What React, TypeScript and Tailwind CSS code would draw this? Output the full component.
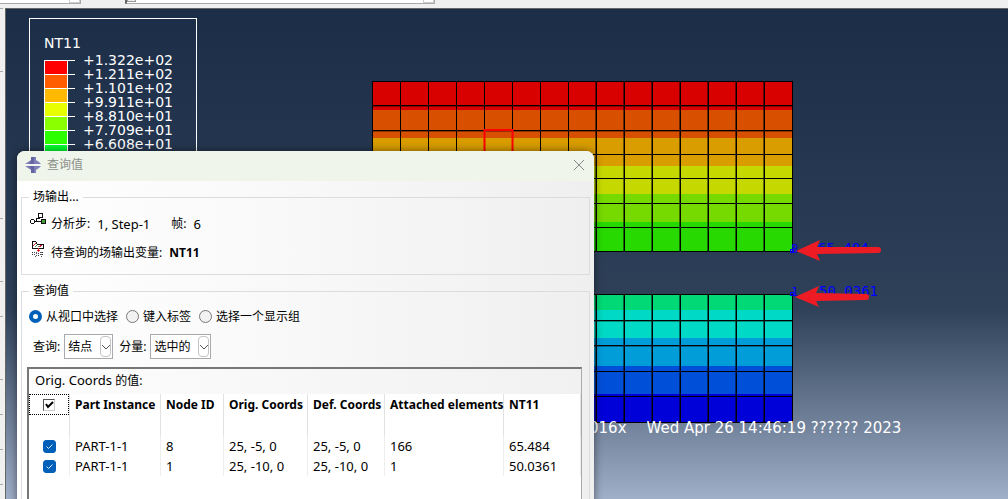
import { useState } from 'react';

const legend = [
  ['+1.322e+02', '#ff0000'],
  ['+1.211e+02', '#ff5d00'],
  ['+1.101e+02', '#ffb900'],
  ['+9.911e+01', '#e8ff00'],
  ['+8.810e+01', '#8bff00'],
  ['+7.709e+01', '#2eff00'],
  ['+6.608e+01', '#00ff2e'],
];

const upperBands = [
  [0, 29, '#d90000'],
  [29, 28, '#d94f00'],
  [57, 28, '#d99d00'],
  [85, 28, '#c5d900'],
  [113, 28, '#76d900'],
  [141, 29, '#27d900'],
] as const;

const lowerBands = [
  [0, 16, '#00d976'],
  [16, 28, '#00d9c5'],
  [44, 28, '#009dd9'],
  [72, 28, '#004fd9'],
  [100, 28, '#0000d9'],
] as const;

const columns = Array.from({ length: 16 }, (_, i) => i * 28);
const upperRows = [0, 24, 49, 73, 97, 122, 146, 170];
const lowerRows = [0, 26, 51, 77, 102, 128];

function Mesh({ bands, rows, x, y }: { bands: readonly (readonly [number, number, string])[]; rows: number[]; x: number; y: number }) {
  const bottom = rows[rows.length - 1];
  return (
    <g transform={`translate(${x} ${y})`} shapeRendering="crispEdges">
      {bands.map(([top, height, fill]) => (
        <rect key={top} x="0" y={top} width="420" height={height} fill={fill} />
      ))}
      {columns.map((c) => (
        <rect key={c} x={c} y="0" width="1" height={bottom + 1} fill="#000" />
      ))}
      {columns.slice(8, 15).map((c) => (
        <rect key={c} x={c - 1} y="0" width="1" height={bottom + 1} fill="#000" opacity="0.5" />
      ))}
      {rows.map((r) => (
        <rect key={r} x="0" y={r} width="421" height="1" fill="#000" />
      ))}
      {rows.slice(1, 3).map((r) => (
        <rect key={r} x="0" y={r + 1} width="421" height="1" fill="#000" opacity="0.35" />
      ))}
    </g>
  );
}

function Contour() {
  return (
    <svg className="absolute left-[366px] top-[67px] h-[352px] w-[530px]" viewBox="372 76 530 352" role="img" aria-label="NT11">
      <Mesh bands={upperBands} rows={upperRows} x={372} y={81} />
      <Mesh bands={lowerBands} rows={lowerRows} x={372} y={294} />
      <rect x="484.500" y="130" width="28" height="25" fill="none" stroke="#ff0000" strokeWidth="2" />
      <g fill="none" stroke="#0000ff" shapeRendering="crispEdges">
        <circle cx="792" cy="251" r="2" />
        <circle cx="792" cy="294" r="2" />
      </g>
      <g fill="#0000ff" fontSize="14" fontFamily="'DejaVu Sans Mono', monospace">
        <text x="791" y="253" fontSize="12">8</text>
        <text x="818" y="253">65.484</text>
        <text x="791" y="296" fontSize="12">1</text>
        <text x="819" y="296">50.0361</text>
      </g>
      <g fill="#ed1c24">
        <path d="M796 251 820 240 817 247 878 247Q881 247 881 250T878 253L817 254 820 261Z" />
        <path d="M795 297 819 286 816 293 866 294Q869 294 869 297T866 300L816 301 819 307Z" />
      </g>
    </svg>
  );
}

function AppIcon() {
  return (
    <svg className="size-4" viewBox="0 0 16 16" aria-hidden="true">
      <path d="M6 0h5v3l3 2 2 2H0l3-2 3-2ZM0 9h16l-2 2-3 2v3H6v-3l-3-2Z" fill="#8080b8" />
      <path d="M6 0h3v7H4l2-3ZM4 9h5v7H6v-4Z" fill="#6464a4" />
      <path d="M0 7h16v2H0Z" fill="#f2f5f2" />
    </svg>
  );
}

function StepIcon() {
  return (
    <svg className="size-4 shrink-0" viewBox="0 0 16 16" shapeRendering="crispEdges" aria-hidden="true">
      <g fill="none" stroke="#111">
        <circle cx="2.500" cy="9.500" r="2" />
        <path d="M5 9.500h6M6.500 9V6.500h3V5M8.500 1.500h4v4h-4Z" />
        <path d="M11.500 7.500h4v4h-4Z" fill="#40a030" />
      </g>
    </svg>
  );
}

function FieldIcon() {
  return (
    <svg className="size-4 shrink-0" viewBox="0 0 16 16" shapeRendering="crispEdges" aria-hidden="true">
      <path d="M2.500 7.500V.5h3l2 3h6v4Z" fill="#fff" stroke="#111" />
      <path d="M3 5l3-3M9 6l3-2" stroke="#d02030" />
      <path d="M5 6l2-2M8 6l1-1" stroke="#30a050" />
      <path d="M8.500 7v4M7 9.500h3" stroke="#e02020" />
      <path d="M2.500 11v4M8.500 12v3M12.500 11v4" stroke="#333" strokeDasharray="1 1" />
      <path d="M4.500 11v4h2v-4ZM10.500 11v4h1v-4Z" fill="none" stroke="#555" strokeDasharray="1 1" />
    </svg>
  );
}

function Picker({ id, label, value, width }: { id: string; label: string; value: string; width: string }) {
  return (
    <div className="flex items-center gap-1">
      <label htmlFor={id}>{label}</label>
      <div className={`relative ${width}`}>
        <select id={id} className="h-[25px] w-full appearance-none border border-[#a9a9af] bg-white pl-[3px]">
          <option>{value}</option>
        </select>
        <span className="pointer-events-none absolute right-0.5 top-0.5 flex h-[21px] w-[11px] items-center justify-center rounded-sm border border-[#c4c4c4] bg-white">
          <svg className="h-2 w-2.5 shrink-0" viewBox="0 0 10 8" fill="none" stroke="#555" aria-hidden="true">
            <path d="m1 2 4 4 4-4" />
          </svg>
        </span>
      </div>
    </div>
  );
}

function Check({ label }: { label: string }) {
  return (
    <span className="relative inline-flex size-[13px]">
      <input type="checkbox" defaultChecked aria-label={label} className="size-[13px] appearance-none rounded-[3px] border border-[#005fb8] bg-white checked:bg-[#005fb8]" />
      <svg className="pointer-events-none absolute inset-0 size-[13px]" viewBox="0 0 13 13" fill="none" stroke="#d8ecff" aria-hidden="true">
        <path d="m3.500 6.500 2 2 4-4" />
      </svg>
    </span>
  );
}

const heads = [
  ['Part Instance', 'w-[91px]'],
  ['Node ID', 'w-[63px]'],
  ['Orig. Coords', 'w-[84px]'],
  ['Def. Coords', 'w-[77px]'],
  ['Attached elements', 'w-[119px]'],
  ['NT11', 'w-[77px]'],
];
const data = [
  ['PART-1-1', '8', '25, -5, 0', '25, -5, 0', '166', '65.484'],
  ['PART-1-1', '1', '25, -10, 0', '25, -10, 0', '1', '50.0361'],
];

function ValueTable() {
  return (
    <div className="ml-[5px] mr-[7px] min-h-[160px] grow border-l-2 border-r border-t-2 border-[#777] border-r-[#aaa] bg-white">
      <div className="h-[25px] bg-linear-to-r from-[#fdfdfd] to-[#f1f1f1] pl-1.5 leading-[22px]">
        <span className="text-[13px]">Orig. Coords</span> 的值:
      </div>
      <table className="w-full table-fixed border-separate border-spacing-0 text-left">
        <thead>
          <tr className="h-[42px] align-top">
            <th className="w-[41px] border-r border-[#e2e2e2] p-0">
              <span className="flex h-[21px] items-center justify-center border border-dotted border-black">
                <span className="relative inline-flex size-3">
                  <input type="checkbox" defaultChecked aria-label="全部" className="size-3 appearance-none border border-b-[#ccc] border-l-[#555] border-r-[#ccc] border-t-[#555] bg-white" />
                  <svg className="pointer-events-none absolute inset-0 size-3" viewBox="0 0 12 12" fill="none" stroke="#000" strokeWidth="2" aria-hidden="true">
                    <path d="m3 5 2 3 5-5" />
                  </svg>
                </span>
              </span>
            </th>
            {heads.map(([name, width]) => (
              <th key={name} className={`${width} overflow-visible whitespace-nowrap border-r border-[#e2e2e2] p-0 pl-[5px] leading-[22px]`}>{name}</th>
            ))}
          </tr>
        </thead>
        <tbody className="text-[13px]">
          {data.map((row) => (
            <tr key={row[1]} className="h-5">
              <td className="border-r border-[#eee] p-0">
                <span className="flex justify-center"><Check label={row[1]} /></span>
              </td>
              {row.map((cell, i) => (
                <td key={i} className="whitespace-nowrap border-r border-[#eee] p-0 pl-[5px] leading-5">{cell}</td>
              ))}
            </tr>
          ))}
        </tbody>
      </table>
    </div>
  );
}

function QueryDialog() {
  const modes = ['从视口中选择', '键入标签', '选择一个显示组'];
  const [mode, setMode] = useState(modes[0]);
  return (
    <section className="absolute left-[11px] top-[142px] flex h-[360px] w-[577px] flex-col rounded-t-lg bg-linear-to-r from-white via-[#f8f8f8] to-[#efefef] font-['Noto_Sans','Noto_Sans_CJK_SC',sans-serif] text-[12px] leading-4 text-black shadow-[0_0_8px_rgba(0,0,0,0.5)]">
      <header className="flex h-[30px] shrink-0 items-center gap-1.5 rounded-t-lg bg-[#eff5eb] pb-0.5 pl-2 pr-[7px] text-[#8c8f8a]">
        <AppIcon />
        <h1 className="grow">查询值</h1>
        <button type="button" aria-label="关闭" className="flex size-4 items-center justify-center">
          <svg className="size-3" viewBox="0 0 12 12" stroke="#858a82" aria-hidden="true"><path d="m1 1 10 10M11 1 1 11" /></svg>
        </button>
      </header>
      <div className="flex grow flex-col gap-2 px-1 pt-2">
        <fieldset className="h-[86px] shrink-0 border border-[#dcdcdc] pl-2">
          <legend className="-ml-px px-1">场输出...</legend>
          <div className="flex h-[29px] items-center gap-[5px]">
            <StepIcon />
            <span className="pt-2">分析步:</span>
            <span className="pl-0.5 pt-2 text-[13px]">1, Step-1</span>
            <span className="pl-4 pt-2">帧:</span>
            <span className="pl-0.5 pt-2 text-[13px]">6</span>
          </div>
          <div className="flex h-[29px] items-center gap-[5px]">
            <FieldIcon />
            <span className="pt-2">待查询的场输出变量:</span>
            <strong className="pl-0.5 pt-2">NT11</strong>
          </div>
        </fieldset>
        <fieldset className="flex grow flex-col border border-b-0 border-[#dcdcdc]">
          <legend className="ml-[7px] px-1">查询值</legend>
          <div className="flex h-[35px] items-center gap-2 pl-[7px]">
            {modes.map((m) => (
              <label key={m} className="flex items-center gap-1">
                <input type="radio" name="mode" checked={mode === m} onChange={() => setMode(m)} className="size-[13px] appearance-none rounded-full border border-[#777] bg-[#f2f2f2] checked:border-4 checked:border-[#005fb8] checked:bg-white" />
                {m}
              </label>
            ))}
          </div>
          <div className="flex h-[33px] items-start gap-1.5 pl-[11px]">
            <Picker id="kind" label="查询:" value="结点" width="w-[49px]" />
            <Picker id="component" label="分量:" value="选中的" width="w-[61px]" />
          </div>
          <ValueTable />
        </fieldset>
      </div>
    </section>
  );
}

export default function App() {
  return (
    <div className="flex h-screen flex-col overflow-hidden bg-[#f0f0f0]">
      <div className="flex h-2 shrink-0 items-start gap-11">
        <div className="flex h-1 w-[81px] justify-end border-b border-r border-[#a9a9af] bg-white">
          <span className="h-[3px] w-[11px] border border-t-0 border-[#ccc]" />
        </div>
        <div className="flex h-1 w-[310px] justify-between border-b border-l-2 border-r border-[#a9a9af] border-l-[#666] bg-white">
          <span className="h-0.5 w-[9px] border border-t-0 border-[#999] bg-[#eee]" />
          <span className="h-[3px] w-[11px] border border-t-0 border-[#ccc]" />
        </div>
      </div>
      <div className="flex min-h-0 grow">
        <div className="flex w-[5px] shrink-0 flex-col pr-0.5">
          <hr className="border-[#aaa]" />
          <hr className="mt-[62px] border-[#aaa]" />
          <hr className="mt-[146px] border-[#aaa]" />
          <hr className="mt-[62px] border-[#aaa]" />
          <hr className="mt-[34px] border-[#aaa]" />
          <hr className="mt-[62px] border-[#aaa]" />
          <hr className="mt-[34px] border-[#aaa]" />
          <hr className="mt-[34px] border-[#aaa]" />
          <hr className="mt-[34px] border-[#aaa]" />
        </div>
        <main className="relative grow overflow-hidden border-l border-t border-[#666] bg-linear-to-b from-[#1b2d47] via-[#2f4159] via-61% to-[#a0afc8]">
          <Contour />
          <section className="absolute left-[23px] top-[9px] h-[180px] w-[168px] border border-white pl-3.5 pt-[17px] font-['DejaVu_Sans',sans-serif] text-[14px] leading-[14px] text-white">
            <h2 className="h-[17px]">NT11</h2>
            <ul>
              {legend.map(([value, color]) => (
                <li key={value} className="flex h-3.5 gap-2">
                  <span className="mt-[7px] flex h-3.5 w-[31px] shrink-0 border-t border-white">
                    <svg className="h-3.5 w-6 border-x border-white" viewBox="0 0 24 14" preserveAspectRatio="none" aria-hidden="true"><rect width="24" height="14" fill={color} /></svg>
                  </span>
                  {value}
                </li>
              ))}
            </ul>
          </section>
          <p className="absolute left-[583px] top-[411px] flex gap-5 whitespace-nowrap font-['DejaVu_Sans',sans-serif] text-[15px] leading-4 text-white">
            <span>016x</span>
            <span>Wed Apr 26 14:46:19 ?????? 2023</span>
          </p>
          <QueryDialog />
        </main>
      </div>
    </div>
  );
}
